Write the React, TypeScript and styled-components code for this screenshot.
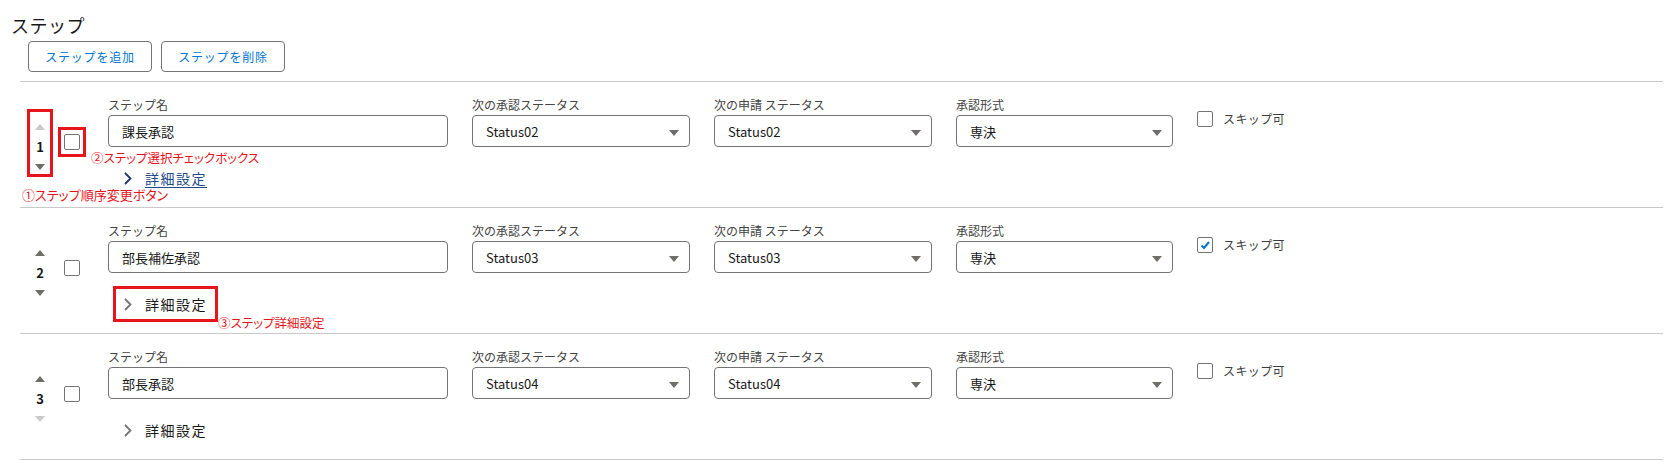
import React from 'react';
import styled, { createGlobalStyle } from 'styled-components';

const GlobalStyle = createGlobalStyle`
  body {
    margin: 0;
    background: #fff;
    color: #181818;
    font-family: "Noto Sans CJK JP", "Noto Sans", sans-serif;
  }
`;

const Page = styled.div`
  width: 1673px;
  padding-top: 13px;
`;

const Title = styled.h2`
  margin: 0 0 4px 11px;
  font-size: 18px;
  line-height: 24px;
  font-weight: 400;
  letter-spacing: 0.5px;
`;

const Toolbar = styled.div`
  display: flex;
  gap: 9px;
  margin: 0 0 9px 28px;
`;

const ToolButton = styled.button`
  width: 124px;
  height: 31px;
  border: 1px solid #747474;
  border-radius: 4px;
  background: #fff;
  color: #0176d3;
  font: inherit;
  font-size: 12px;
  letter-spacing: 0.8px;
  cursor: pointer;
`;

const StepList = styled.div`
  margin: 0 10px 0 20px;
  border-top: 1px solid #c9c9c9;
`;

const StepRow = styled.div`
  display: flex;
  align-items: flex-start;
  padding-bottom: 11px;
  border-bottom: 1px solid #c9c9c9;
`;

const Annotated = `
  box-shadow: inset 0 0 0 3px #e8141c;
`;

const OrderControl = styled.div<{ $annotated?: boolean }>`
  position: relative;
  box-sizing: border-box;
  width: 26px;
  height: 68px;
  margin: 27px 0 0 7px;
  padding-top: 15px;
  display: flex;
  flex-direction: column;
  align-items: center;
  ${(p) => (p.$annotated ? Annotated : '')}
`;

const ArrowButton = styled.button<{ $disabled?: boolean }>`
  display: block;
  width: 10px;
  height: 6px;
  padding: 0;
  border: none;
  background: none;
  color: ${(p) => (p.$disabled ? '#c9c9c9' : '#706e6b')};
  cursor: ${(p) => (p.$disabled ? 'default' : 'pointer')};
  svg {
    display: block;
  }
`;

const StepNo = styled.span`
  margin: 10px 0;
  font-size: 13px;
  line-height: 14px;
  font-weight: 700;
  color: #181818;
`;

const SelectCell = styled.div<{ $annotated?: boolean }>`
  position: relative;
  box-sizing: border-box;
  width: 28px;
  height: 30px;
  margin: 45px 0 0 5px;
  display: flex;
  align-items: center;
  justify-content: center;
  ${(p) => (p.$annotated ? Annotated : '')}
`;

const Note = styled.span<{ $size: number }>`
  position: absolute;
  white-space: nowrap;
  color: #e8141c;
  font-size: ${(p) => p.$size}px;
  line-height: 16px;
  letter-spacing: 0;
  text-decoration: none;
  font-feature-settings: "palt";
  pointer-events: none;
`;

const OrderNote = styled(Note)`
  left: -5px;
  top: calc(100% + 10px);
`;

const SelectNote = styled(Note)`
  left: calc(100% + 5px);
  top: 23px;
`;

const DetailNote = styled(Note)`
  left: 100%;
  top: 29px;
`;

const Box = styled.span`
  box-sizing: border-box;
  width: 16px;
  height: 16px;
  border: 1px solid #747474;
  border-radius: 2px;
  background: #fff;
  display: inline-flex;
  align-items: center;
  justify-content: center;
  flex: none;
`;

const Main = styled.div`
  margin-left: 22px;
  padding-top: 15px;
  display: flex;
  flex-direction: column;
  align-items: flex-start;
`;

const FieldsRow = styled.div`
  display: flex;
  gap: 24px;
  align-items: flex-start;
`;

const Field = styled.label<{ $width: number }>`
  display: flex;
  flex-direction: column;
  width: ${(p) => p.$width}px;
`;

const FieldLabel = styled.span`
  margin-bottom: 3px;
  font-size: 12px;
  line-height: 15px;
  color: #444;
`;

const TextInput = styled.input`
  box-sizing: border-box;
  height: 32px;
  padding: 0 13px;
  border: 1px solid #747474;
  border-radius: 4px;
  font: inherit;
  font-size: 13px;
  color: #181818;
  outline: none;
`;

const Select = styled.div`
  box-sizing: border-box;
  height: 32px;
  padding: 0 10px 0 13px;
  border: 1px solid #747474;
  border-radius: 4px;
  display: flex;
  align-items: center;
  justify-content: space-between;
  font-size: 13px;
  color: #181818;
  svg {
    margin-top: 4px;
  }
`;

const SkipField = styled.label`
  margin-top: 13px;
  display: flex;
  align-items: center;
  gap: 10px;
  font-size: 12px;
  line-height: 18px;
  letter-spacing: 0.4px;
  color: #3e3e3c;
`;

const DetailsButton = styled.button<{ $annotated?: boolean; $hover?: boolean }>`
  position: relative;
  height: 36px;
  margin: 13px 0 0 5px;
  padding: 0 11px;
  display: inline-flex;
  align-items: center;
  gap: 13px;
  border: none;
  background: none;
  font: inherit;
  font-size: 14px;
  letter-spacing: 1.5px;
  color: ${(p) => (p.$hover ? '#1f4a8c' : '#181818')};
  text-decoration: ${(p) => (p.$hover ? 'underline' : 'none')};
  text-underline-offset: 3px;
  cursor: pointer;
  ${(p) => (p.$annotated ? Annotated : '')}
  svg {
    color: ${(p) => (p.$hover ? '#1b3a6b' : '#747474')};
  }
`;

const Triangle = ({ up }: { up?: boolean }) => (
  <svg width="10" height="6" viewBox="0 0 10 6">
    <path d={up ? 'M0 6 L5 0 L10 6 Z' : 'M0 0 L10 0 L5 6 Z'} fill="currentColor" />
  </svg>
);

const Chevron = () => (
  <svg width="8" height="13" viewBox="0 0 8 13">
    <path d="M1 1 L6.5 6.5 L1 12" fill="none" stroke="currentColor" strokeWidth="1.8" />
  </svg>
);

const SelectArrow = () => (
  <svg width="10" height="6" viewBox="0 0 10 6">
    <path d="M0 0 L10 0 L5 6 Z" fill="#706e6b" />
  </svg>
);

const Checkbox = ({ checked }: { checked?: boolean }) => (
  <Box>
    {checked && (
      <svg width="12" height="12" viewBox="0 0 12 12">
        <path d="M2.5 6.5 L5 9 L10 3" fill="none" stroke="#0176d3" strokeWidth="2" />
      </svg>
    )}
  </Box>
);

type Step = {
  no: number;
  name: string;
  next: string;
  apply: string;
  format: string;
  skip: boolean;
};

const steps: Step[] = [
  { no: 1, name: '課長承認', next: 'Status02', apply: 'Status02', format: '専決', skip: false },
  { no: 2, name: '部長補佐承認', next: 'Status03', apply: 'Status03', format: '専決', skip: true },
  { no: 3, name: '部長承認', next: 'Status04', apply: 'Status04', format: '専決', skip: false },
];

function StepItem({ step, index }: { step: Step; index: number }) {
  const first = index === 0;
  const last = index === steps.length - 1;
  return (
    <StepRow>
      <OrderControl $annotated={first}>
        <ArrowButton $disabled={first}>
          <Triangle up />
        </ArrowButton>
        <StepNo>{step.no}</StepNo>
        <ArrowButton $disabled={last}>
          <Triangle />
        </ArrowButton>
        {first && <OrderNote $size={13}>①ステップ順序変更ボタン</OrderNote>}
      </OrderControl>
      <SelectCell $annotated={first}>
        <Checkbox />
        {first && <SelectNote $size={12.5}>②ステップ選択チェックボックス</SelectNote>}
      </SelectCell>
      <Main>
        <FieldsRow>
          <Field $width={340}>
            <FieldLabel>ステップ名</FieldLabel>
            <TextInput defaultValue={step.name} />
          </Field>
          <Field $width={218}>
            <FieldLabel>次の承認ステータス</FieldLabel>
            <Select>
              <span>{step.next}</span>
              <SelectArrow />
            </Select>
          </Field>
          <Field $width={218}>
            <FieldLabel>次の申請 ステータス</FieldLabel>
            <Select>
              <span>{step.apply}</span>
              <SelectArrow />
            </Select>
          </Field>
          <Field $width={217}>
            <FieldLabel>承認形式</FieldLabel>
            <Select>
              <span>{step.format}</span>
              <SelectArrow />
            </Select>
          </Field>
          <SkipField>
            <Checkbox checked={step.skip} />
            スキップ可
          </SkipField>
        </FieldsRow>
        <DetailsButton $hover={index === 0} $annotated={index === 1}>
          <Chevron />
          <span>詳細設定</span>
          {index === 1 && <DetailNote $size={12.5}>③ステップ詳細設定</DetailNote>}
        </DetailsButton>
      </Main>
    </StepRow>
  );
}

export default function App() {
  return (
    <Page>
      <GlobalStyle />
      <Title>ステップ</Title>
      <Toolbar>
        <ToolButton>ステップを追加</ToolButton>
        <ToolButton>ステップを削除</ToolButton>
      </Toolbar>
      <StepList>
        {steps.map((step, index) => (
          <StepItem key={step.no} step={step} index={index} />
        ))}
      </StepList>
    </Page>
  );
}
